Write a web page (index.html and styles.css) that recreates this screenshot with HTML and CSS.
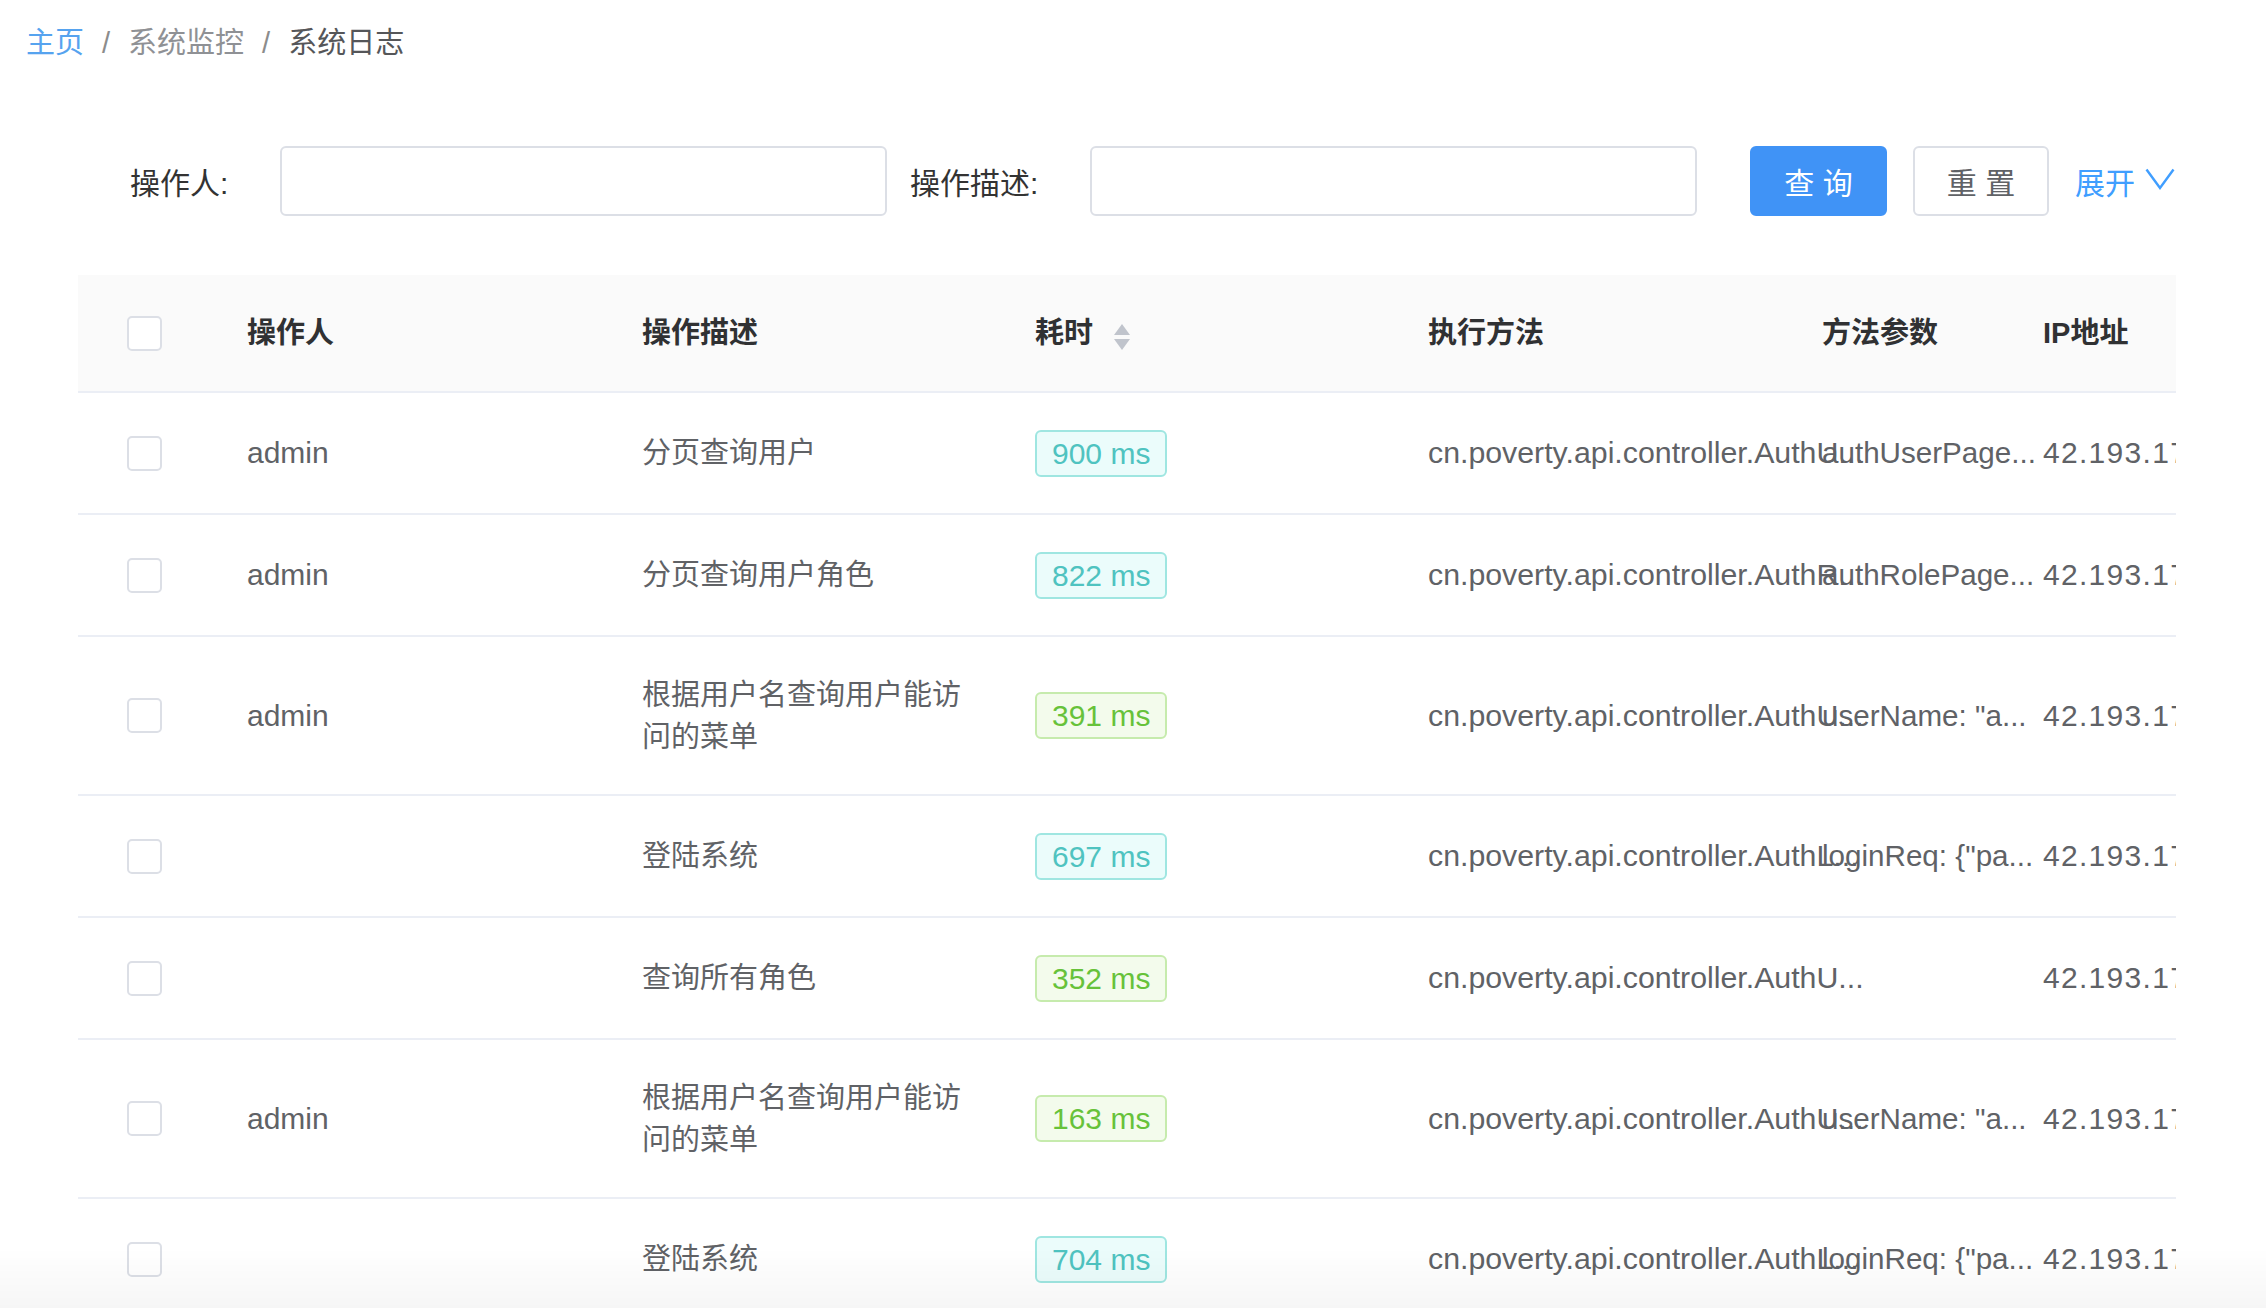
FILE: index.html
```html
<!DOCTYPE html>
<html lang="zh-CN">
<head>
<meta charset="utf-8">
<title>系统日志</title>
<link rel="stylesheet" href="styles.css">
</head>
<body>
<div class="page">
  <div class="breadcrumb">
    <span class="crumb link">主页</span><span class="sep">/</span><span class="crumb mid">系统监控</span><span class="sep">/</span><span class="crumb current">系统日志</span>
  </div>

  <div class="search">
    <label class="label label-1">操作人:</label>
    <div class="input"></div>
    <label class="label label-2">操作描述:</label>
    <div class="input"></div>
    <button class="btn btn-primary">查 询</button>
    <button class="btn btn-default">重 置</button>
    <span class="expand">展开<svg class="chev" width="30" height="22" viewBox="0 0 30 22"><polyline points="1.5,1.5 15,20 28.5,1.5" fill="none" stroke="#409eff" stroke-width="2.4"/></svg></span>
  </div>

  <div class="table">
    <div class="row head">
      <div class="cell cb"><span class="checkbox"></span></div>
      <div class="cell">操作人</div>
      <div class="cell">操作描述</div>
      <div class="cell">耗时<span class="sorter"><i class="up"></i><i class="down"></i></span></div>
      <div class="cell">执行方法</div>
      <div class="cell">方法参数</div>
      <div class="cell">IP地址</div>
    </div>

    <div class="row">
      <div class="cell cb"><span class="checkbox"></span></div>
      <div class="cell">admin</div>
      <div class="cell"><span class="desc">分页查询用户</span></div>
      <div class="cell"><span class="tag teal">900 ms</span></div>
      <div class="cell nowrap method">cn.poverty.api.controller.AuthU...</div>
      <div class="cell nowrap param">authUserPage...</div>
      <div class="cell nowrap ip">42.193.178.62</div>
    </div>

    <div class="row">
      <div class="cell cb"><span class="checkbox"></span></div>
      <div class="cell">admin</div>
      <div class="cell"><span class="desc">分页查询用户角色</span></div>
      <div class="cell"><span class="tag teal">822 ms</span></div>
      <div class="cell nowrap method">cn.poverty.api.controller.AuthR...</div>
      <div class="cell nowrap param">authRolePage...</div>
      <div class="cell nowrap ip">42.193.178.62</div>
    </div>

    <div class="row">
      <div class="cell cb"><span class="checkbox"></span></div>
      <div class="cell">admin</div>
      <div class="cell"><span class="desc">根据用户名查询用户能访问的菜单</span></div>
      <div class="cell"><span class="tag green">391 ms</span></div>
      <div class="cell nowrap method">cn.poverty.api.controller.AuthU...</div>
      <div class="cell nowrap param">userName: "a...</div>
      <div class="cell nowrap ip">42.193.178.62</div>
    </div>

    <div class="row">
      <div class="cell cb"><span class="checkbox"></span></div>
      <div class="cell"></div>
      <div class="cell"><span class="desc">登陆系统</span></div>
      <div class="cell"><span class="tag teal">697 ms</span></div>
      <div class="cell nowrap method">cn.poverty.api.controller.AuthL...</div>
      <div class="cell nowrap param">loginReq: {"pa...</div>
      <div class="cell nowrap ip">42.193.178.62</div>
    </div>

    <div class="row">
      <div class="cell cb"><span class="checkbox"></span></div>
      <div class="cell"></div>
      <div class="cell"><span class="desc">查询所有角色</span></div>
      <div class="cell"><span class="tag green">352 ms</span></div>
      <div class="cell nowrap method">cn.poverty.api.controller.AuthU...</div>
      <div class="cell nowrap param"></div>
      <div class="cell nowrap ip">42.193.178.62</div>
    </div>

    <div class="row">
      <div class="cell cb"><span class="checkbox"></span></div>
      <div class="cell">admin</div>
      <div class="cell"><span class="desc">根据用户名查询用户能访问的菜单</span></div>
      <div class="cell"><span class="tag green">163 ms</span></div>
      <div class="cell nowrap method">cn.poverty.api.controller.AuthU...</div>
      <div class="cell nowrap param">userName: "a...</div>
      <div class="cell nowrap ip">42.193.178.62</div>
    </div>

    <div class="row">
      <div class="cell cb"><span class="checkbox"></span></div>
      <div class="cell"></div>
      <div class="cell"><span class="desc">登陆系统</span></div>
      <div class="cell"><span class="tag teal">704 ms</span></div>
      <div class="cell nowrap method">cn.poverty.api.controller.AuthL...</div>
      <div class="cell nowrap param">loginReq: {"pa...</div>
      <div class="cell nowrap ip">42.193.178.62</div>
    </div>
  </div>
</div>
<div class="bottom-fade"></div>
</body>
</html>
```

FILE: styles.css
```css
html, body {
  margin: 0;
  padding: 0;
  background: #fff;
}
body {
  font-family: "Liberation Sans", "Noto Sans CJK SC", sans-serif;
  color: #606266;
  overflow: hidden;
  height: 1308px;
}
.page {
  width: 2266px;
}
.breadcrumb {
  padding: 29px 0 0 26px;
  height: 29px;
  line-height: 29px;
  font-size: 29px;
  display: flex;
  align-items: center;
}
.crumb.link { color: #56a3ef; }
.crumb.mid { color: #8f9195; }
.crumb.current { color: #555659; }
.sep {
  color: #8c8c8c;
  margin: 0 18px;
  font-weight: 400;
}

.search {
  margin-top: 88px;
  height: 70px;
  padding-left: 130px;
  display: flex;
  align-items: center;
}
.label {
  font-size: 30px;
  color: #333;
  flex: none;
}
.label-1 { width: 150px; }
.label-2 { width: 180px; margin-left: 23px; }
.input {
  flex: none;
  width: 607px;
  height: 70px;
  box-sizing: border-box;
  border: 2px solid #dcdfe6;
  border-radius: 6px;
  background: #fff;
}
.btn {
  flex: none;
  height: 70px;
  box-sizing: border-box;
  border-radius: 6px;
  font-family: inherit;
  font-size: 30px;
  padding: 0;
  cursor: pointer;
}
.btn-primary {
  margin-left: 53px;
  width: 137px;
  background: #4093f6;
  border: 2px solid #4093f6;
  color: #fff;
}
.btn-default {
  margin-left: 26px;
  width: 136px;
  background: #fff;
  border: 2px solid #dcdfe6;
  color: #606266;
}
.expand {
  margin-left: 26px;
  font-size: 30px;
  color: #409eff;
  display: flex;
  align-items: center;
}
.chev {
  margin-left: 10px;
  margin-top: -4px;
}

.table {
  margin-top: 59px;
  margin-left: 78px;
  width: 2098px;
  overflow: hidden;
}
.row {
  display: grid;
  grid-template-columns: 169px 395px 393px 393px 394px 221px 1fr;
  border-bottom: 2px solid #ebeef5;
  padding: 36.5px 0;
  font-size: 30px;
  line-height: 42px;
  color: #606266;
}
.row.head {
  background: #fafafa;
  height: 116px;
  padding: 0;
  box-sizing: content-box;
  color: #303133;
  font-weight: 700;
  font-size: 29px;
}
.cell {
  display: flex;
  align-items: center;
  min-height: 47px;
  min-width: 0;
}
.cell.cb {
  padding-left: 49px;
}
.nowrap {
  white-space: nowrap;
  overflow: visible;
}
.method {
  font-size: 30.3px;
}
.param {
  font-size: 29.6px;
}
.ip {
  letter-spacing: 1.3px;
}
.desc {
  font-size: 29px;
  max-width: 330px;
}
.checkbox {
  display: block;
  width: 35px;
  height: 35px;
  box-sizing: border-box;
  border: 2px solid #dcdfe6;
  border-radius: 5px;
  background: #fff;
}
.sorter {
  display: inline-flex;
  flex-direction: column;
  margin-left: 21px;
  margin-top: 8px;
  gap: 4px;
}
.sorter i {
  display: block;
  width: 0;
  height: 0;
  border-left: 8.5px solid transparent;
  border-right: 8.5px solid transparent;
}
.sorter .up { border-bottom: 11px solid #c0c4cc; }
.sorter .down { border-top: 11px solid #c0c4cc; }

.tag {
  display: inline-block;
  height: 47px;
  line-height: 43px;
  box-sizing: border-box;
  padding: 0 15px;
  border: 2px solid;
  border-radius: 6px;
  font-size: 30px;
  white-space: nowrap;
}
.tag.teal {
  color: #4fc3c0;
  background: #ebfcfb;
  border-color: #9fe6e1;
}
.tag.green {
  color: #67c23a;
  background: #f3fbec;
  border-color: #c6ebad;
}

.bottom-fade {
  position: fixed;
  left: 0;
  right: 0;
  bottom: 0;
  height: 60px;
  background: linear-gradient(to bottom, rgba(0,0,0,0), rgba(0,0,0,0.035));
  pointer-events: none;
}
```
